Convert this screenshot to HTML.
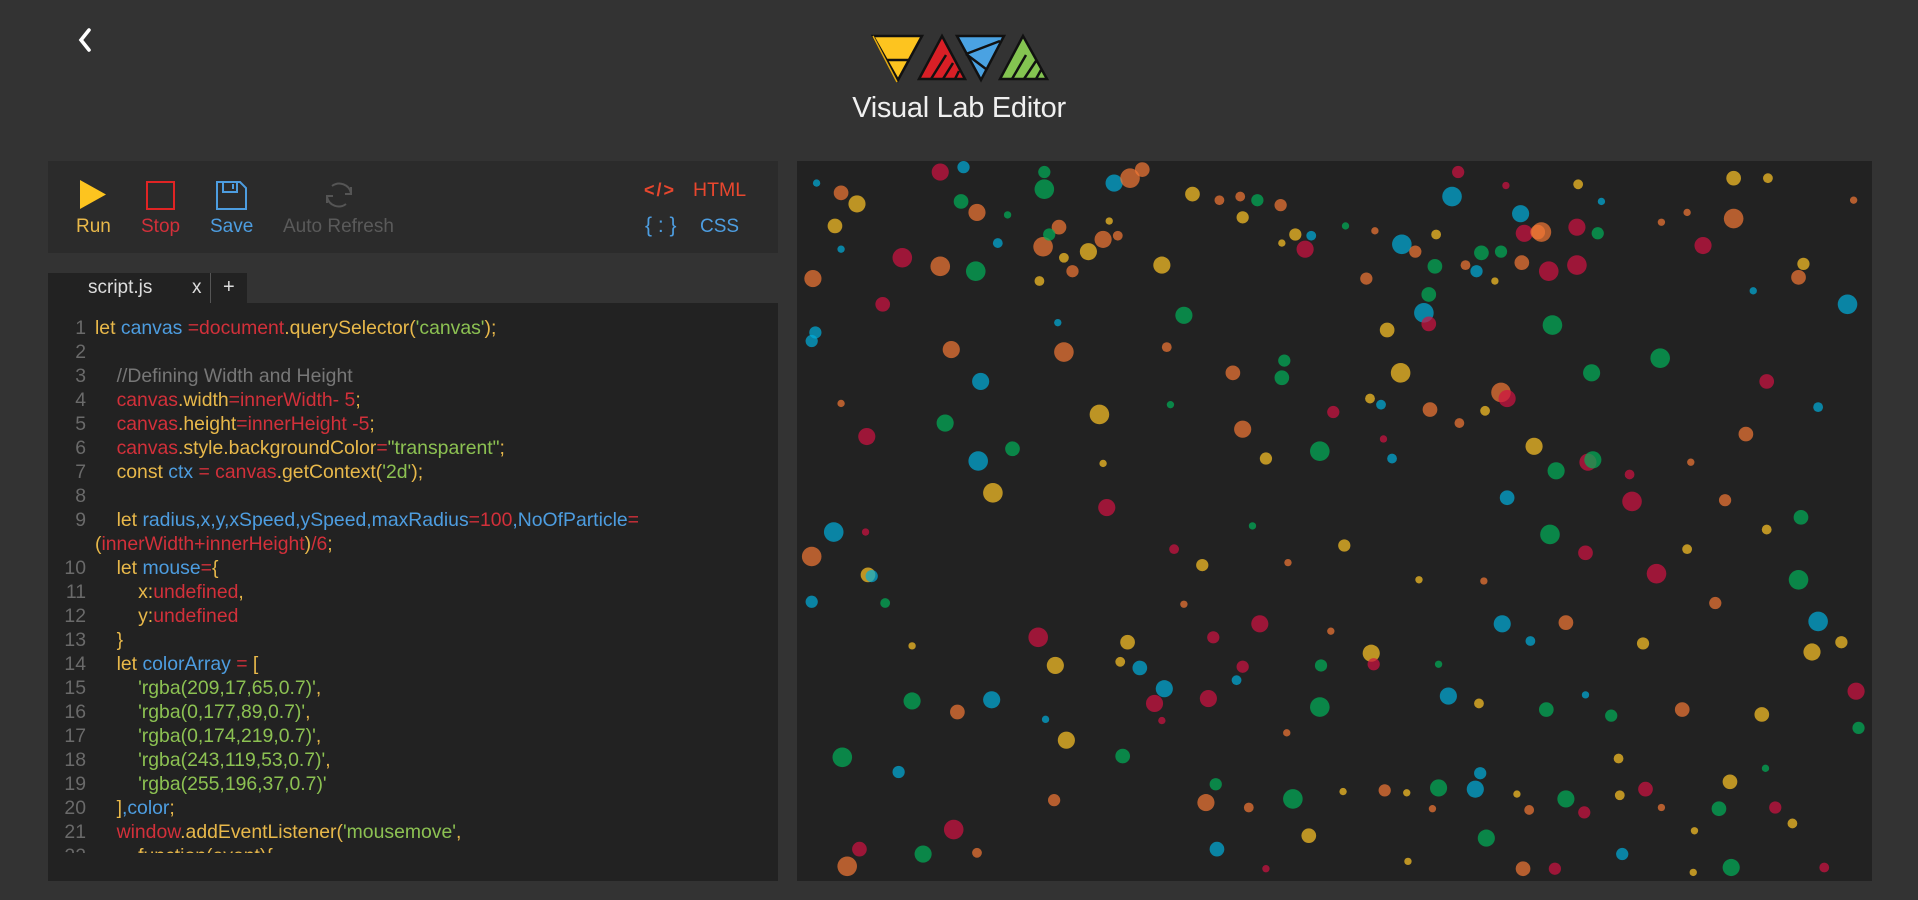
<!DOCTYPE html>
<html><head><meta charset="utf-8"><style>
body{margin:0;width:1918px;height:900px;background:#333;overflow:hidden;font-family:"Liberation Sans",sans-serif;position:relative}
.abs{position:absolute}
.title{left:0;width:1918px;top:92px;text-align:center;color:#f0f0f0;font-size:29px;letter-spacing:-0.3px}
.tb{left:48px;top:161px;width:730px;height:92px;background:#2b2b2b}
.lbl{top:216px;font-size:19px}
.tabbar{left:48px;top:273px;width:199px;height:30px;background:#222}
.code{left:48px;top:303px;width:730px;height:578px;background:#222}
.lines{position:absolute;left:0;top:13px;height:537px;overflow:hidden;width:730px;font-size:19.4px}
.ln{height:24px;line-height:24px;white-space:pre;position:relative}
.n{position:absolute;right:692px;color:#6a6a6a;text-align:right}
.t{position:absolute;left:47px}
.y{color:#e8b84a}.b{color:#4d9de0}.r{color:#d2303a}.g{color:#8cc152}.c{color:#777}.w{color:#ddd}
.canvas{left:797px;top:161px;width:1075px;height:720px;background:#222}
</style></head><body>
<svg class="abs" style="left:75px;top:26px" width="20" height="28" viewBox="0 0 20 28"><path d="M14 4 L6 14 L14 24" stroke="#fff" stroke-width="3.6" fill="none" stroke-linecap="round"/></svg>
<svg class="abs" style="left:860px;top:25px" width="200" height="65" viewBox="0 0 200 65">
<path d="M13 11 H62 L38 55 Z" fill="#fdc41f" stroke="#111" stroke-width="2.5"/><path d="M25 35 H50" stroke="#111" stroke-width="2.5"/><path d="M13 11 L37 57" stroke="#e0a812" stroke-width="1.5"/>
<path d="M82 11 L105 54 H59 Z" fill="#d91f26" stroke="#111" stroke-width="2.5"/><path d="M71 54 L86 30 M83 54 L93 38 M95 54 L99 46" stroke="#111" stroke-width="2.5"/>
<path d="M97 11 H144 L121 55 Z" fill="#4aa2e2" stroke="#111" stroke-width="2.5"/><path d="M106 29 L140 16 M106 29 L126 44" stroke="#111" stroke-width="2.5"/>
<path d="M163 11 L187 54 H140 Z" fill="#84c451" stroke="#111" stroke-width="2.5"/><path d="M152 54 L166 30 M164 54 L176 36 M176 54 L181 45" stroke="#111" stroke-width="2.5"/>
</svg>
<div class="abs title">Visual Lab Editor</div>
<div class="abs tb"></div>
<svg class="abs" style="left:78px;top:178px" width="300" height="34" viewBox="78 178 300 34">
<path d="M80 180 L106 194.5 L80 209 Z" fill="#fdc41f"/>
<rect x="147" y="182" width="27" height="27" fill="none" stroke="#e02424" stroke-width="2"/>
<path d="M217 182 H240 L246 188 V209 H217 Z M223 182 V192 H237 V182 M233 184 V189" fill="none" stroke="#4d9de0" stroke-width="2"/>
<path d="M332 186 A12 12 0 0 1 351 193 M351 187 V194 H345 M346 204 A12 12 0 0 1 327 197 M327 203 V196 H333" fill="none" stroke="#555" stroke-width="2"/>
</svg>
<div class="abs lbl" style="left:76px;color:#e8b84a">Run</div>
<div class="abs lbl" style="left:141px;color:#d2303a">Stop</div>
<div class="abs lbl" style="left:210px;color:#4d9de0">Save</div>
<div class="abs lbl" style="left:283px;color:#5a5a5a">Auto Refresh</div>
<div class="abs" style="left:644px;top:180px;font-size:18px;color:#e8472e;font-weight:bold;letter-spacing:2px">&lt;/&gt;</div>
<div class="abs" style="left:693px;top:179px;font-size:19.5px;color:#e8472e">HTML</div>
<div class="abs" style="left:645px;top:214px;font-size:21px;color:#4d9de0;white-space:pre">{ : }</div>
<div class="abs" style="left:700px;top:216px;font-size:19px;color:#4d9de0">CSS</div>
<div class="abs tabbar"></div>
<div class="abs" style="left:88px;top:277px;font-size:19px;color:#ddd">script.js</div>
<div class="abs" style="left:192px;top:277px;font-size:19px;color:#ddd">x</div>
<div class="abs" style="left:210px;top:273px;width:1px;height:30px;background:#555"></div>
<div class="abs" style="left:223px;top:276px;font-size:20px;color:#ddd">+</div>
<div class="abs code"><div class="lines">
<div class="ln"><span class="n">1</span><span class="t"><span class="y">let </span><span class="b">canvas </span><span class="r">=document</span><span class="y">.querySelector(</span><span class="g">'canvas'</span><span class="y">);</span></span></div>
<div class="ln"><span class="n">2</span></div>
<div class="ln"><span class="n">3</span><span class="t">    <span class="c">//Defining Width and Height</span></span></div>
<div class="ln"><span class="n">4</span><span class="t">    <span class="r">canvas</span><span class="y">.width</span><span class="r">=innerWidth- 5</span><span class="y">;</span></span></div>
<div class="ln"><span class="n">5</span><span class="t">    <span class="r">canvas</span><span class="y">.height</span><span class="r">=innerHeight -5</span><span class="y">;</span></span></div>
<div class="ln"><span class="n">6</span><span class="t">    <span class="r">canvas</span><span class="y">.style.backgroundColor</span><span class="r">=</span><span class="g">"transparent"</span><span class="y">;</span></span></div>
<div class="ln"><span class="n">7</span><span class="t">    <span class="y">const </span><span class="b">ctx </span><span class="r">= canvas</span><span class="y">.getContext(</span><span class="g">'2d'</span><span class="y">);</span></span></div>
<div class="ln"><span class="n">8</span></div>
<div class="ln"><span class="n">9</span><span class="t">    <span class="y">let </span><span class="b">radius,x,y,xSpeed,ySpeed,maxRadius</span><span class="r">=100</span><span class="b">,NoOfParticle</span><span class="r">=</span></span></div>
<div class="ln"><span class="t"><span class="y">(</span><span class="r">innerWidth+innerHeight</span><span class="y">)</span><span class="r">/6</span><span class="y">;</span></span></div>
<div class="ln"><span class="n">10</span><span class="t">    <span class="y">let </span><span class="b">mouse</span><span class="r">=</span><span class="y">{</span></span></div>
<div class="ln"><span class="n">11</span><span class="t">        <span class="y">x:</span><span class="r">undefined</span><span class="y">,</span></span></div>
<div class="ln"><span class="n">12</span><span class="t">        <span class="y">y:</span><span class="r">undefined</span></span></div>
<div class="ln"><span class="n">13</span><span class="t">    <span class="y">}</span></span></div>
<div class="ln"><span class="n">14</span><span class="t">    <span class="y">let </span><span class="b">colorArray </span><span class="r">= </span><span class="y">[</span></span></div>
<div class="ln"><span class="n">15</span><span class="t">        <span class="g">'rgba(209,17,65,0.7)'</span><span class="y">,</span></span></div>
<div class="ln"><span class="n">16</span><span class="t">        <span class="g">'rgba(0,177,89,0.7)'</span><span class="y">,</span></span></div>
<div class="ln"><span class="n">17</span><span class="t">        <span class="g">'rgba(0,174,219,0.7)'</span><span class="y">,</span></span></div>
<div class="ln"><span class="n">18</span><span class="t">        <span class="g">'rgba(243,119,53,0.7)'</span><span class="y">,</span></span></div>
<div class="ln"><span class="n">19</span><span class="t">        <span class="g">'rgba(255,196,37,0.7)'</span></span></div>
<div class="ln"><span class="n">20</span><span class="t">    <span class="y">]</span><span class="b">,color</span><span class="y">;</span></span></div>
<div class="ln"><span class="n">21</span><span class="t">    <span class="r">window</span><span class="y">.addEventListener(</span><span class="g">'mousemove'</span><span class="y">,</span></span></div>
<div class="ln"><span class="n">22</span><span class="t">        <span class="y">function(event){</span></span></div>
</div></div>
<div class="abs canvas"></div>
<svg class="abs" style="left:797px;top:161px" width="1075" height="720" viewBox="652 132 878 588" id="dots"></svg>
<script>
var C={r:'rgba(209,17,65,0.7)',g:'rgba(0,177,89,0.7)',b:'rgba(0,174,219,0.7)',o:'rgba(243,119,53,0.7)',y:'rgba(255,196,37,0.7)'};
var d="668,150,3,b 688,158,6,o 701,167,7,y 683,185,6,y 688,204,3,b 738,211,8,r 769,141,7,r 788,137,5,b 786,165,6,g 799,174,7,o 769,218,8,o 798,222,8,g 824,176,3,g 816,199,4,b 854,141,5,g 854,155,8,g 866,186,6,o 853,202,8,o 858,192,5,g 850,230,4,y 870,211,4,y 877,222,5,o 890,206,7,y 902,196,7,o 907,181,3,y 914,193,4,o 911,150,7,b 924,146,8,o 934,139,6,o 950,217,7,y 975,159,6,y 997,164,4,o 1014,161,4,o 1028,164,5,g 1016,178,5,y 1047,168,5,o 1059,192,5,y 1067,204,7,r 1072,193,4,b 1048,199,3,y 1100,185,3,g 1124,189,3,o 1146,200,8,b 1157,206,5,o 1174,192,4,y 1187,161,8,b 1192,141,5,r 1231,152,3,r 1243,175,7,b 1246,191,7,r 1257,190,6,o 1260,190,8,o 1289,186,7,r 1306,191,5,g 1290,151,4,y 1309,165,3,b 1358,182,3,o 1379,174,3,o 1417,146,6,y 1417,179,8,o 1445,146,4,y 1515,164,3,o 1392,201,7,r 1474,216,5,y 1470,227,6,o 1433,238,3,b 1510,249,8,b 1289,217,8,r 1266,222,8,r 1244,215,6,o 1211,207,6,g 1227,206,5,g 1207,222,5,b 1222,230,3,y 1198,217,4,o 1173,218,6,g 1168,241,6,g 1164,256,8,b 1168,265,6,r 1134,270,6,y 1117,228,5,o 665,228,7,o 722,249,6,r 667,272,5,b 664,279,5,b 778,286,7,o 870,288,8,o 865,264,3,b 968,258,7,g 954,284,4,o 1050,295,5,g 1048,309,6,g 1008,305,6,o 1145,305,8,y 1269,266,8,g 1357,293,8,g 1301,305,7,g 1227,321,8,o 1232,326,7,r 1169,335,6,o 1193,346,4,o 1214,336,4,y 1120,326,4,y 1129,331,4,b 1090,337,5,r 1016,351,7,o 1035,375,5,y 1079,369,8,g 1131,359,3,r 1138,375,4,b 802,312,7,b 688,330,3,o 773,346,7,g 709,357,7,r 899,339,8,y 957,331,3,g 828,367,6,g 800,377,8,b 812,403,8,y 902,379,3,y 905,415,7,r 1254,365,7,y 1272,385,7,g 1298,378,7,r 1302,376,7,g 1332,388,4,r 1444,312,6,r 1486,333,4,b 1427,355,6,o 1382,378,3,o 1232,407,6,b 1334,410,8,r 1410,409,5,o 1472,423,6,g 1444,433,4,y 1267,437,8,g 1296,452,6,r 1379,449,4,y 1354,469,8,r 1470,474,8,g 1402,493,5,o 1486,508,8,b 1505,525,5,y 1481,533,7,y 1343,526,5,y 1280,509,6,o 1228,510,7,b 1251,524,4,b 1213,475,3,o 1160,474,3,y 1099,446,5,y 1024,430,3,g 983,462,5,y 960,449,4,r 1053,460,3,o 1030,510,7,r 968,494,3,o 992,521,5,r 922,525,6,y 916,541,4,y 932,546,6,b 952,563,7,b 988,571,7,r 944,575,7,r 1016,545,5,r 1011,556,4,b 1080,544,5,g 1088,516,3,o 1121,534,7,y 1123,543,5,r 1176,543,3,g 1079,578,8,g 1184,569,7,b 1209,575,4,y 1264,580,6,g 1296,568,3,b 1317,585,5,g 1375,580,6,o 1440,584,6,y 1517,565,7,r 1519,595,5,g 682,435,8,b 708,435,3,r 664,455,8,o 710,470,6,y 713,471,5,b 664,492,5,b 724,493,4,g 849,521,8,r 863,544,7,y 746,528,3,y 746,573,7,g 783,582,6,o 811,572,7,b 855,588,3,b 872,605,7,y 950,589,3,r 1052,599,3,o 918,618,6,g 689,619,8,g 735,631,5,b 994,641,5,g 986,656,7,o 1021,660,4,o 1057,653,8,g 1098,647,3,y 1132,646,5,o 1150,648,3,y 1176,644,7,g 1206,645,7,b 1210,632,5,b 1240,649,3,y 1280,653,7,g 1324,650,4,y 1345,645,6,r 1323,620,4,y 1414,639,6,y 1443,628,3,g 1405,661,6,g 1451,660,5,r 1385,679,3,y 1358,660,3,o 1295,664,5,r 1250,662,4,o 1171,661,3,o 862,654,5,o 780,678,8,r 703,694,6,r 693,708,8,o 755,698,7,g 799,697,4,o 995,694,6,b 1070,683,6,y 1151,704,3,y 1215,685,7,g 1245,710,6,o 1271,710,5,r 1326,698,5,b 1415,709,7,g 1384,713,3,y 1465,673,4,y 1491,709,4,r 1035,710,3,r";
var s="";d.split(" ").forEach(function(p){var a=p.split(",");s+='<circle cx="'+a[0]+'" cy="'+a[1]+'" r="'+a[2]+'" fill="'+C[a[3]]+'"/>';});
document.getElementById("dots").innerHTML=s;
</script>
</body></html>
